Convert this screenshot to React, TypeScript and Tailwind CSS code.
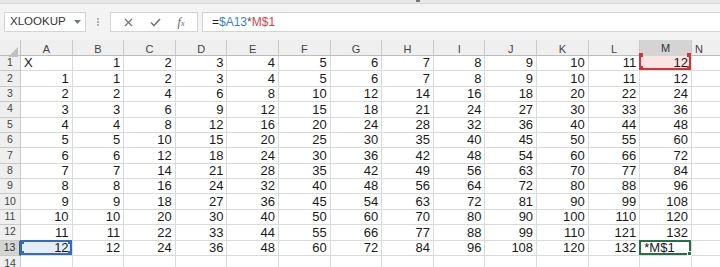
import React from "react";

const cols = ["A", "B", "C", "D", "E", "F", "G", "H", "I", "J", "K", "L", "M"];

const gridCols = "grid grid-cols-[21px_repeat(13,51.62px)_1fr]";

function rowValues(r: number): (string | number)[] {
  if (r === 1) return ["X", 1, 2, 3, 4, 5, 6, 7, 8, 9, 10, 11, 12];
  const n = r - 1;
  return [n, ...cols.slice(1).map((_, i) => n * (i + 1))];
}

function Handles({ color }: { color: string }) {
  const dot = `absolute w-[4px] h-[4px] ${color}`;
  return (
    <>
      <span className={`${dot} -left-[2px] -top-[2px]`} />
      <span className={`${dot} -right-[2px] -top-[2px]`} />
      <span className={`${dot} -left-[2px] -bottom-[2px]`} />
      <span className={`${dot} -right-[2px] -bottom-[2px]`} />
    </>
  );
}

function Cell({ r, c, value }: { r: number; c: number; value: string | number }) {
  const isM1 = r === 1 && c === 12;
  const isA13 = r === 13 && c === 0;
  const isM13 = r === 13 && c === 12;
  const left = typeof value === "string" || isM13;

  return (
    <div
      className={`relative h-[15.38px] border-r border-b border-[#dadada] flex items-center ${
        left ? "justify-start pl-[3px]" : "justify-end pr-[3px]"
      } ${isM1 ? "bg-[#fbe4e4]" : ""} ${isA13 ? "bg-[#e5edf8]" : ""}`}
    >
      {isM13 ? <span className="pl-[1px]">*M$1</span> : value}
      {isM1 && (
        <div className="absolute -left-[1px] -top-[1px] right-0 bottom-0 border-2 border-[#d0343a] border-t-0">
          <Handles color="bg-[#d0343a]" />
        </div>
      )}
      {isA13 && (
        <div className="absolute -left-[1px] -top-[1px] right-0 bottom-0 border-2 border-[#2f6cc4]">
          <Handles color="bg-[#2f6cc4]" />
        </div>
      )}
      {isM13 && (
        <div className="absolute -left-[1px] -top-[1px] right-0 bottom-0 border-2 border-[#217346]">
          <span className="absolute -right-[3px] -bottom-[3px] w-[5px] h-[5px] bg-[#217346] border border-white" />
        </div>
      )}
    </div>
  );
}

export default function App() {
  const rows = Array.from({ length: 13 }, (_, i) => i + 1);

  return (
    <div className="w-[720px] h-[267px] overflow-hidden bg-white font-['Liberation_Sans',Arial,sans-serif] text-[#1a1a1a]">
      <div className="h-[4px] bg-[#e6e6e6] border-b border-[#d6d6d6] relative">
        <span className="absolute left-[416px] top-0 w-[4px] h-[2px] bg-[#777]" />
      </div>

      <div className="h-[36px] bg-[#f3f3f3] flex items-start pt-[8px] pl-[4px]">
        <div className="w-[82px] h-[20px] bg-white border border-[#d4d4d4] flex items-center justify-between pl-[5px] pr-[4px] text-[11.5px] text-[#333]">
          <span>XLOOKUP</span>
          <svg width="7" height="4" viewBox="0 0 7 4">
            <path d="M0 0 L7 0 L3.5 4 Z" fill="#777" />
          </svg>
        </div>
        <div className="w-[24px] h-[20px] flex flex-col items-center justify-center gap-[1px]">
          <span className="w-[2px] h-[2px] bg-[#b0b0b0]" />
          <span className="w-[2px] h-[2px] bg-[#b0b0b0]" />
          <span className="w-[2px] h-[2px] bg-[#b0b0b0]" />
        </div>
        <div className="w-[88px] h-[20px] bg-white border border-[#d4d4d4] flex items-center justify-around px-[4px] text-[#666]">
          <svg width="9" height="9" viewBox="0 0 9 9">
            <path d="M1 1 L8 8 M8 1 L1 8" stroke="#777" strokeWidth="1.3" />
          </svg>
          <svg width="11" height="9" viewBox="0 0 11 9">
            <path d="M1 4.5 L4 7.5 L10 1" stroke="#777" strokeWidth="1.6" fill="none" />
          </svg>
          <span className="font-['Liberation_Serif',serif] italic text-[12px] text-[#666] leading-none">
            f<span className="text-[8px]">x</span>
          </span>
        </div>
        <div className="ml-[4px] flex-1 h-[20px] bg-white border border-[#d4d4d4] border-r-0 flex items-center pl-[9px] text-[12px]">
          <span className="text-[#1f1f1f]">=</span>
          <span className="text-[#3c7fd6]">$A13</span>
          <span className="text-[#555]">*</span>
          <span className="text-[#d8423f]">M$1</span>
        </div>
      </div>

      <div className={`${gridCols} h-[16px] bg-[#efefef] border-b border-[#bcbcbc] text-[11px] text-[#444]`}>
        <div className="relative border-r border-[#c6c6c6]">
          <svg className="absolute right-[2px] bottom-[2px]" width="10" height="10" viewBox="0 0 10 10">
            <path d="M10 0 L10 10 L0 10 Z" fill="#c0c0c0" />
          </svg>
        </div>
        {cols.map((c) => (
          <div
            key={c}
            className={`flex items-center justify-center border-r border-[#c9c9c9] ${
              c === "M" ? "bg-[#d4d4d4] border-b-2 border-b-[#217346] text-[#333]" : ""
            }`}
          >
            {c}
          </div>
        ))}
        <div className="flex items-center pl-[3px]">N</div>
      </div>

      <div className="text-[13px]">
        {rows.map((r) => (
          <div key={r} className={gridCols}>
            <div
              className={`h-[15.38px] flex items-center justify-center text-[10.5px] border-b border-r border-[#c9c9c9] ${
                r === 13 ? "bg-[#d4d4d4] border-r-2 border-r-[#217346] text-[#333]" : "bg-[#efefef] text-[#444]"
              }`}
            >
              {r}
            </div>
            {rowValues(r).map((v, c) => (
              <Cell key={c} r={r} c={c} value={v} />
            ))}
            <div className="h-[15.38px] border-b border-[#dadada]" />
          </div>
        ))}
        <div className={gridCols}>
          <div className="h-[12px] flex items-start justify-center text-[10.5px] bg-[#efefef] text-[#444] border-r border-[#c9c9c9]">
            14
          </div>
          {cols.map((c) => (
            <div key={c} className="h-[12px] border-r border-[#dadada]" />
          ))}
          <div />
        </div>
      </div>
    </div>
  );
}
